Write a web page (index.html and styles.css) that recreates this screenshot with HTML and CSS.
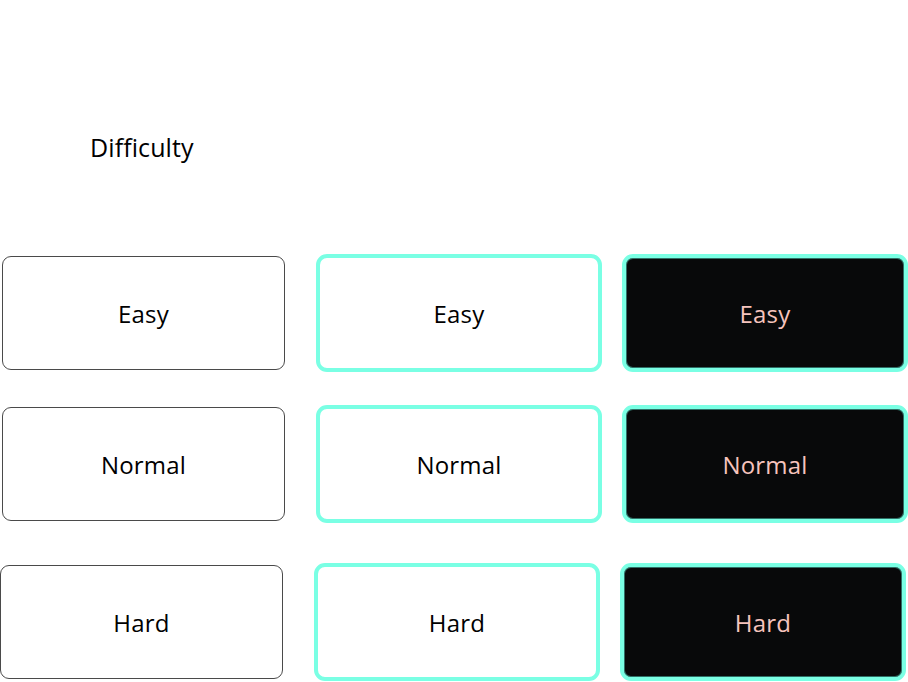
FILE: index.html
```html
<!DOCTYPE html>
<html>
<head>
<meta charset="utf-8">
<link rel="stylesheet" href="styles.css">
</head>
<body>
<div class="page">
  <h1 class="title">Difficulty</h1>
  <div class="grid">
    <div class="row row1">
      <div class="btn plain">Easy</div>
      <div class="btn outline">Easy</div>
      <div class="btn dark">Easy</div>
    </div>
    <div class="row row2">
      <div class="btn plain">Normal</div>
      <div class="btn outline">Normal</div>
      <div class="btn dark">Normal</div>
    </div>
    <div class="row row3">
      <div class="btn plain">Hard</div>
      <div class="btn outline">Hard</div>
      <div class="btn dark">Hard</div>
    </div>
  </div>
</div>
</body>
</html>
```
FILE: styles.css
```css
html, body {
  margin: 0;
  padding: 0;
  background: #ffffff;
}
body {
  width: 908px;
  height: 682px;
  overflow: hidden;
  font-family: "Open Sans", "Noto Sans", sans-serif;
  color: #000;
}
.page {
  padding-top: 130px;
}
.title {
  margin: 0 0 0 90px;
  font-size: 25px;
  font-weight: 400;
  line-height: 34px;
  letter-spacing: 0.1px;
}
.grid {
  margin-top: 90px;
  display: flex;
  flex-direction: column;
}
.row {
  display: flex;
  align-items: center;
  height: 118px;
}
.row1 { padding-left: 2px; }
.row2 { padding-left: 2px; margin-top: 33px; }
.row3 { padding-left: 0; margin-top: 40px; }
.btn {
  box-sizing: border-box;
  display: flex;
  align-items: center;
  justify-content: center;
  font-size: 24px;
  letter-spacing: 0.2px;
}
.plain {
  width: 283px;
  height: 114px;
  border: 1.5px solid #4a4a4a;
  border-radius: 9px;
  background: #fff;
}
.outline {
  width: 286px;
  height: 118px;
  margin-left: 31px;
  border: 4.5px solid #7affe4;
  border-radius: 11px;
  background: #fff;
}
.dark {
  width: 286px;
  height: 118px;
  margin-left: 20px;
  border: 4px solid #7affe4;
  border-radius: 11px;
  background: #08090a;
  color: #f6c4bd;
  box-shadow: inset 0 0 0 1px #2f6f66;
}
```
